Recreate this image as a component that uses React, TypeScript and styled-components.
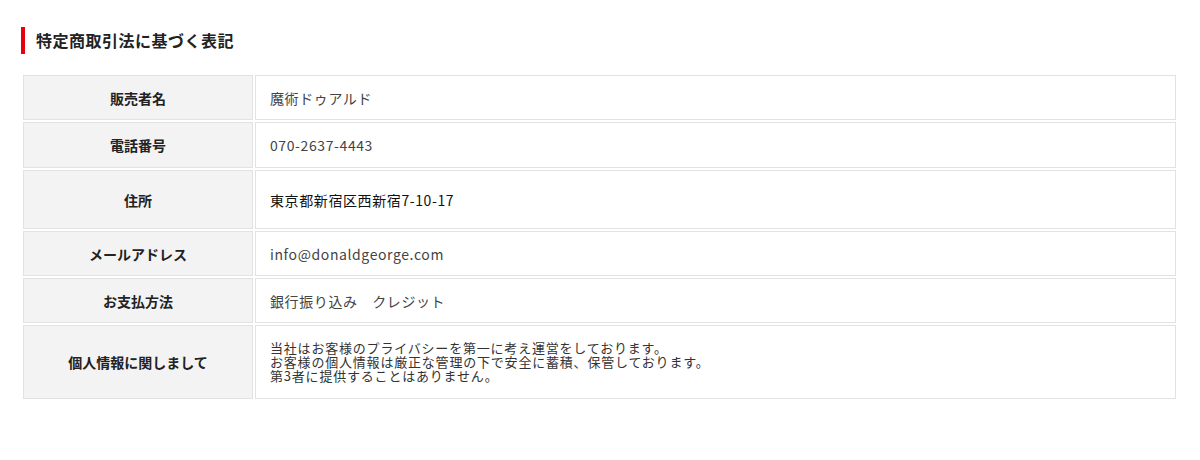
import styled, { createGlobalStyle } from "styled-components";

const GlobalStyle = createGlobalStyle`
  body {
    margin: 0;
    background: #fff;
    font-family: "Noto Sans CJK JP", "Noto Sans", sans-serif;
  }
`;

const Page = styled.div`
  padding: 27px 24px 0 21px;
`;

const Heading = styled.h2`
  display: flex;
  align-items: center;
  gap: 11px;
  margin: 0 0 21px;
  font-size: 16px;
  font-weight: 700;
  letter-spacing: 0.5px;
  color: #222;
  line-height: 27px;

  &::before {
    content: "";
    width: 4px;
    height: 27px;
    background: #e60012;
  }
`;

const Table = styled.div`
  display: flex;
  flex-direction: column;
  gap: 2px;
  margin-left: 2px;
  width: 1153px;
`;

const Row = styled.div<{ $h: number }>`
  display: flex;
  gap: 2px;
  height: ${(p) => p.$h}px;
`;

const Label = styled.div`
  box-sizing: border-box;
  width: 230px;
  flex-shrink: 0;
  border: 1px solid #e2e2e2;
  background: #f3f3f3;
  display: flex;
  align-items: center;
  justify-content: center;
  font-size: 14px;
  font-weight: 700;
  color: #222;
`;

const Value = styled.div<{ $dark?: boolean }>`
  box-sizing: border-box;
  flex: 1;
  border: 1px solid #e2e2e2;
  display: flex;
  flex-direction: column;
  justify-content: center;
  padding: 0 14px;
  font-size: 14px;
  letter-spacing: 0.6px;
  color: ${(p) => (p.$dark ? "#111" : "#444")};
`;

const Line = styled.div`
  line-height: 14px;
  font-size: 13px;
  letter-spacing: 0.8px;
  color: #333;
`;

const rows = [
  { label: "販売者名", value: "魔術ドゥアルド", h: 45 },
  { label: "電話番号", value: "070-2637-4443", h: 46 },
  { label: "住所", value: "東京都新宿区西新宿7-10-17", h: 59, dark: true },
  { label: "メールアドレス", value: "info@donaldgeorge.com", h: 45 },
  { label: "お支払方法", value: "銀行振り込み　クレジット", h: 45 },
];

const privacy = [
  "当社はお客様のプライバシーを第一に考え運営をしております。",
  "お客様の個人情報は厳正な管理の下で安全に蓄積、保管しております。",
  "第3者に提供することはありません。",
];

export default function App() {
  return (
    <>
      <GlobalStyle />
      <Page>
        <Heading>特定商取引法に基づく表記</Heading>
        <Table>
          {rows.map((r) => (
            <Row key={r.label} $h={r.h}>
              <Label>{r.label}</Label>
              <Value $dark={r.dark}>{r.value}</Value>
            </Row>
          ))}
          <Row $h={74}>
            <Label>個人情報に関しまして</Label>
            <Value>
              {privacy.map((t) => (
                <Line key={t}>{t}</Line>
              ))}
            </Value>
          </Row>
        </Table>
      </Page>
    </>
  );
}
